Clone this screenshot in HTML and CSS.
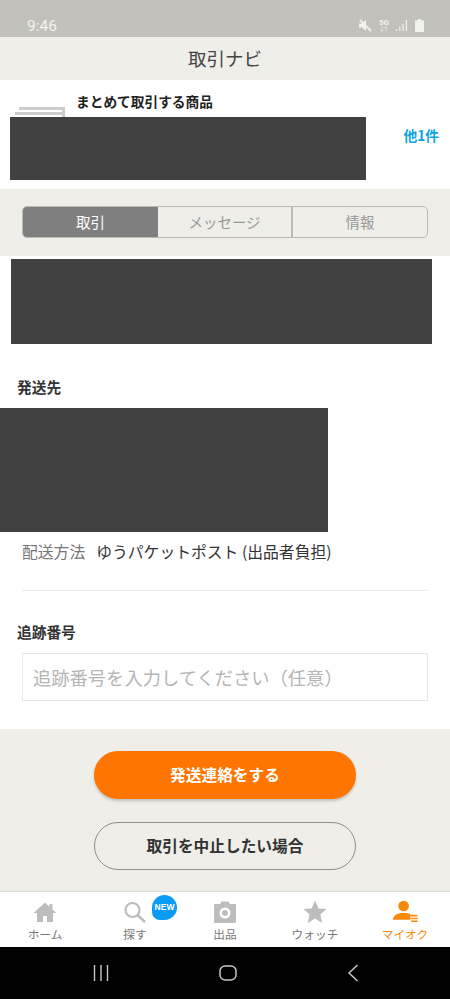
FILE: index.html
```html
<!DOCTYPE html>
<html lang="ja">
<head>
    <meta charset="UTF-8">
    <meta name="viewport" content="width=device-width, initial-scale=1.0">
    <title>取引ナビ</title>
    <link rel="stylesheet" href="styles.css">
</head>
<body>
    <div class="statusbar">
        <span class="time">9:46</span>
        <div class="status-icons">
            <svg width="13" height="13" viewBox="0 0 13 13"><path d="M0 4.500h3L7 1v11L3 8.500H0z" fill="#f2f2ef"/><path d="M1 1l11 11" stroke="#f2f2ef" stroke-width="1.800"/></svg>
            <div class="net">
                <span>5G</span>
                <svg width="10" height="6" viewBox="0 0 10 6"><path d="M3 0v5.500M1.200 3.800L3 5.500l1.800-1.700M7 6V.5M5.200 2.200L7 .5l1.800 1.700" fill="none" stroke="#e4e4e0" stroke-width="0.800"/></svg>
            </div>
            <svg width="12" height="13" viewBox="0 0 12 13"><path d="M0 10h1.200v2H0zM3.200 7.500h1.200V12H3.200zM6.400 4.500h1.200V12H6.400zM9.800 1H11v11H9.800z" fill="#f2f2ef"/></svg>
            <svg width="9" height="13" viewBox="0 0 9 13"><path d="M3 0h3v1.200h2a1 1 0 0 1 1 1V12a1 1 0 0 1-1 1H1a1 1 0 0 1-1-1V2.200a1 1 0 0 1 1-1h2z" fill="#f2f2ef"/></svg>
        </div>
    </div>
    <header class="titlebar">取引ナビ</header>

    <section class="product">
        <div class="product-head">
            <div class="stack"></div>
            <h2>まとめて取引する商品</h2>
        </div>
        <div class="product-row">
            <div class="redact redact-product"></div>
            <a class="more">他1件</a>
        </div>
    </section>

    <div class="tabwrap">
        <div class="tabs">
            <div class="tab tab-on">取引</div>
            <div class="tab tab-mid">メッセージ</div>
            <div class="tab">情報</div>
        </div>
    </div>

    <main class="content">
        <div class="redact redact-notice"></div>
        <h3 class="label label-ship">発送先</h3>
        <div class="redact redact-address"></div>
        <div class="method">
            <span class="method-name">配送方法</span>
            <span class="method-value">ゆうパケットポスト (出品者負担)</span>
        </div>
        <hr class="rule">
        <h3 class="label label-track">追跡番号</h3>
        <div class="field">追跡番号を入力してください（任意）</div>
    </main>

    <div class="actions">
        <button class="btn btn-main">発送連絡をする</button>
        <button class="btn btn-sub">取引を中止したい場合</button>
    </div>

    <nav class="tabbar">
        <div class="nav-item">
            <svg width="24" height="24" viewBox="0 0 24 24"><path d="M12 2.500L0.500 13H4v9h6v-6h4v6h6v-9h3.500L19.500 9.400V4h-3v2.700z" fill="#bdbdbd"/></svg>
            <span>ホーム</span>
        </div>
        <div class="nav-item">
            <svg width="24" height="24" viewBox="0 0 24 24"><circle cx="9.500" cy="10" r="7" fill="none" stroke="#bdbdbd" stroke-width="2.200"/><path d="M14.500 15l7.500 7" stroke="#bdbdbd" stroke-width="2.600"/></svg>
            <span>探す</span>
            <div class="badge">NEW</div>
        </div>
        <div class="nav-item">
            <svg width="24" height="24" viewBox="0 0 24 24"><path d="M2 4h5l1.500-2.500h7L17 4h5a1 1 0 0 1 1 1v17a1 1 0 0 1-1 1H2a1 1 0 0 1-1-1V5a1 1 0 0 1 1-1z" fill="#bdbdbd"/><circle cx="12" cy="13" r="5.500" fill="#fff"/><circle cx="12" cy="13" r="3" fill="#bdbdbd"/></svg>
            <span>出品</span>
        </div>
        <div class="nav-item">
            <svg width="24" height="24" viewBox="0 0 24 24"><path d="M12 0.500l3.400 7.900 8.100.7-6.100 5.500 1.800 8.400-7.200-4.400-7.200 4.400 1.800-8.400L0.500 9.100l8.100-.7z" fill="#bdbdbd"/></svg>
            <span>ウォッチ</span>
        </div>
        <div class="nav-item nav-on">
            <svg width="28" height="26" viewBox="0 0 28 26"><circle cx="12.500" cy="6.500" r="5.800" fill="#f58a0b"/><path d="M1 21.500c0-5 4-7.500 11.500-7.500 3 0 5.500.4 7.500 1.300V21.500z" fill="#f58a0b"/><path d="M20.500 17h7M20.500 20h7M20.500 23h7" stroke="#f58a0b" stroke-width="1.800"/></svg>
            <span>マイオク</span>
        </div>
    </nav>

    <div class="softkeys">
        <svg width="16" height="16" viewBox="0 0 16 16"><path d="M1.500 0v16M8 0v16M14.500 0v16" stroke="#c8c8c8" stroke-width="1.400"/></svg>
        <svg width="18" height="16" viewBox="0 0 18 16"><rect x="1" y="1" width="16" height="14" rx="5" fill="none" stroke="#c8c8c8" stroke-width="1.500"/></svg>
        <svg width="12" height="18" viewBox="0 0 12 18"><path d="M10.500 1L2 9l8.500 8" fill="none" stroke="#c8c8c8" stroke-width="1.500"/></svg>
    </div>
</body>
</html>
```

FILE: styles.css
```css
* {
    box-sizing: border-box;
}
body {
    margin: 0;
    width: 450px;
    height: 999px;
    overflow: hidden;
    background-color: #fff;
    color: #333;
    font-family: "Noto Sans CJK JP", "Noto Sans", sans-serif;
}
.redact {
    background-color: #414141;
}

/* status bar */
.statusbar {
    height: 37px;
    padding: 14px 26px 0 27px;
    display: flex;
    justify-content: space-between;
    align-items: center;
    background-color: #c2c1bb;
    color: #f4f4f2;
}
.time {
    font-family: Roboto, sans-serif;
    font-size: 15.500px;
}
.status-icons {
    display: flex;
    align-items: center;
    gap: 7px;
}
.net {
    display: flex;
    flex-direction: column;
    align-items: center;
    font-family: Roboto, sans-serif;
    font-size: 8px;
    line-height: 7px;
    font-weight: 700;
    color: #f2f2ef;
}

.titlebar {
    height: 43px;
    line-height: 43px;
    text-align: center;
    font-size: 18.500px;
    color: #444;
    background-color: #efeee8;
}

/* product */
.product {
    height: 109px;
    position: relative;
    overflow: hidden;
}
.product-head {
    height: 37px;
    position: relative;
}
.product-head h2 {
    margin: 0;
    padding: 11px 0 0 76px;
    font-size: 13.700px;
    line-height: 20px;
    font-weight: 700;
    color: #222;
}
.stack {
    position: absolute;
    left: 19px;
    top: 27px;
    width: 46px;
    height: 12px;
    border-top: 3px solid #ccc;
    border-right: 3px solid #ccc;
}
.stack::after {
    content: "";
    position: absolute;
    left: -4px;
    top: 2px;
    width: 47px;
    height: 10px;
    background-color: #fff;
    border-top: 3px solid #ccc;
    border-right: 3px solid #ccc;
}
.product-row {
    display: flex;
    align-items: flex-start;
    justify-content: space-between;
    padding: 0 11px 0 10px;
}
.redact-product {
    width: 356px;
    height: 63px;
    position: relative;
}
.more {
    margin-top: 8px;
    font-size: 13.700px;
    line-height: 20px;
    font-weight: 700;
    color: #0aa5e0;
}

/* tabs */
.tabwrap {
    height: 67px;
    padding: 17px 22px 0;
    background-color: #efeee8;
}
.tabs {
    display: flex;
    height: 32px;
    border: 1px solid #bcbab2;
    border-radius: 5px;
    overflow: hidden;
}
.tab {
    flex: 1;
    text-align: center;
    line-height: 30px;
    font-size: 14.500px;
    color: #999;
    border-left: 2px solid #bcbab2;
}
.tab-on {
    flex: 0 0 135px;
    border-left: 0;
    background-color: #7f7f7f;
    color: #fff;
}
.tab-mid {
    flex: 0 0 133px;
    border-left: 0;
}

/* main */
.content {
    height: 473px;
    padding-top: 3px;
}
.redact-notice {
    width: 421px;
    height: 85px;
    margin-left: 11px;
}
.label {
    margin: 0 0 0 17px;
    font-size: 14.700px;
    line-height: 22px;
    font-weight: 700;
    color: #333;
}
.label-ship {
    padding-top: 32px;
    height: 64px;
}
.redact-address {
    width: 328px;
    height: 124px;
}
.method {
    margin: 9px 0 0 22px;
    display: flex;
    gap: 11px;
    font-size: 15.800px;
    line-height: 22px;
}
.method-name {
    color: #777;
}
.method-value {
    color: #333;
}
.rule {
    margin: 27px 22px 0;
    border: 0;
    border-top: 1px solid #ebebeb;
}
.label-track {
    margin-top: 30px;
}
.field {
    margin: 10px 22px 0;
    height: 48px;
    line-height: 46px;
    padding-left: 10px;
    border: 1px solid #e8e8e8;
    font-size: 18.300px;
    white-space: nowrap;
    color: #b5b5b5;
}

/* buttons */
.actions {
    height: 162px;
    padding-top: 22px;
    display: flex;
    flex-direction: column;
    align-items: center;
    gap: 23px;
    background-color: #efeee8;
}
.btn {
    width: 262px;
    height: 48px;
    padding-bottom: 2px;
    border-radius: 24px;
    font-family: inherit;
    font-size: 15.700px;
    font-weight: 700;
}
.btn-main {
    border: 0;
    background-color: #ff7500;
    color: #fff;
    box-shadow: 0 2px 3px rgba(0, 0, 0, 0.2);
}
.btn-sub {
    border: 1px solid #8f8f8f;
    background-color: transparent;
    color: #333;
}

/* bottom nav */
.tabbar {
    height: 56px;
    display: flex;
    border-top: 1px solid #dcdbd5;
    background-color: #fff;
}
.nav-item {
    flex: 1;
    position: relative;
    display: flex;
    flex-direction: column;
    align-items: center;
    padding-top: 8px;
    font-size: 11.700px;
    line-height: 14px;
    color: #777;
}
.nav-item svg {
    height: 24px;
}
.nav-item span {
    margin-top: 3px;
}
.nav-on {
    color: #f58a0b;
}
.badge {
    position: absolute;
    left: 62px;
    top: 3px;
    width: 25px;
    height: 25px;
    border-radius: 50% 50% 50% 8px;
    background-color: #0a9cf5;
    color: #fff;
    font-family: "Liberation Sans", sans-serif;
    font-size: 8.500px;
    font-weight: 700;
    line-height: 25px;
    text-align: center;
}

.softkeys {
    height: 52px;
    padding: 0 91px 0 93px;
    display: flex;
    justify-content: space-between;
    align-items: center;
    background-color: #000;
}
```
